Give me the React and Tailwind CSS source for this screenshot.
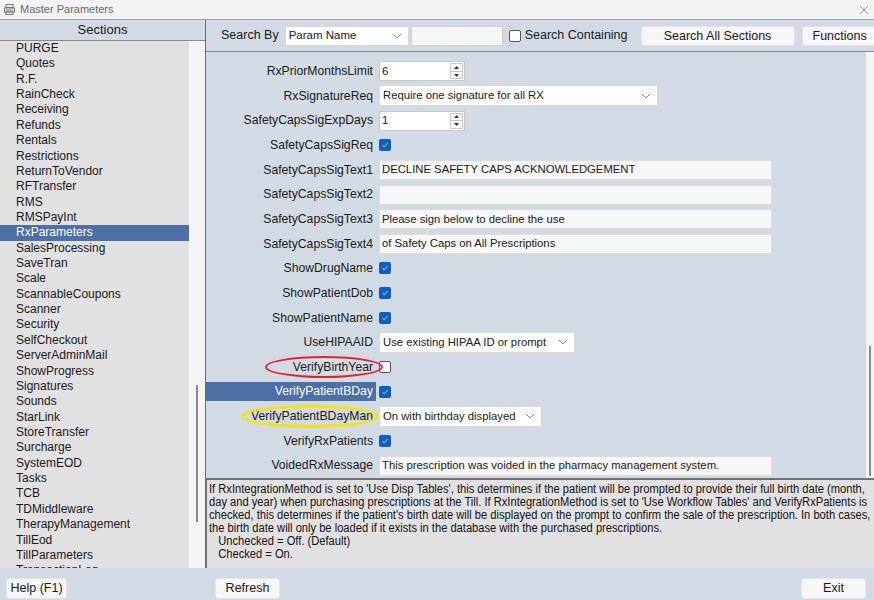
import React from 'react';

const sections = [
  'PURGE', 'Quotes', 'R.F.', 'RainCheck', 'Receiving', 'Refunds', 'Rentals', 'Restrictions',
  'ReturnToVendor', 'RFTransfer', 'RMS', 'RMSPayInt', 'RxParameters', 'SalesProcessing', 'SaveTran',
  'Scale', 'ScannableCoupons', 'Scanner', 'Security', 'SelfCheckout', 'ServerAdminMail', 'ShowProgress',
  'Signatures', 'Sounds', 'StarLink', 'StoreTransfer', 'Surcharge', 'SystemEOD', 'Tasks', 'TCB',
  'TDMiddleware', 'TherapyManagement', 'TillEod', 'TillParameters', 'TransactionLog',
];

const params = [
  { name: 'RxPriorMonthsLimit', type: 'spin', value: '6' },
  { name: 'RxSignatureReq', type: 'select', value: 'Require one signature for all RX', w: 'w-[279px]' },
  { name: 'SafetyCapsSigExpDays', type: 'spin', value: '1' },
  { name: 'SafetyCapsSigReq', type: 'check', value: true },
  { name: 'SafetyCapsSigText1', type: 'text', value: 'DECLINE SAFETY CAPS ACKNOWLEDGEMENT' },
  { name: 'SafetyCapsSigText2', type: 'text', value: '' },
  { name: 'SafetyCapsSigText3', type: 'text', value: 'Please sign below to decline the use' },
  { name: 'SafetyCapsSigText4', type: 'text', value: 'of Safety Caps on All Prescriptions' },
  { name: 'ShowDrugName', type: 'check', value: true },
  { name: 'ShowPatientDob', type: 'check', value: true },
  { name: 'ShowPatientName', type: 'check', value: true },
  { name: 'UseHIPAAID', type: 'select', value: 'Use existing HIPAA ID or prompt', w: 'w-[196px]' },
  { name: 'VerifyBirthYear', type: 'check', value: false, mark: 'red' },
  { name: 'VerifyPatientBDay', type: 'check', value: true, selected: true },
  { name: 'VerifyPatientBDayMan', type: 'select', value: 'On with birthday displayed', w: 'w-[163px]', mark: 'yellow' },
  { name: 'VerifyRxPatients', type: 'check', value: true },
  { name: 'VoidedRxMessage', type: 'text', value: 'This prescription was voided in the pharmacy management system.' },
];

const helpLines = [
  "If RxIntegrationMethod is set to 'Use Disp Tables', this determines if the patient will be prompted to provide their full birth date (month,",
  "day and year) when purchasing prescriptions at the Till. If RxIntegrationMethod is set to 'Use Workflow Tables' and VerifyRxPatients is",
  "checked, this determines if the patient's birth date will be displayed on the prompt to confirm the sale of the prescription. In both cases,",
  'the birth date will only be loaded if it exists in the database with the purchased prescriptions.',
];

const Chevron = () => (
  <svg width="10" height="6" viewBox="0 0 10 6" className="shrink-0">
    <path d="M1 1 L5 5 L9 1" fill="none" stroke="#8a8a8a" strokeWidth="1" />
  </svg>
);

const Check = ({ on }) =>
  on ? (
    <span className="w-[12px] h-[12px] rounded-[2px] bg-[#0f5fc2] flex items-center justify-center">
      <svg width="8" height="8" viewBox="0 0 8 8">
        <path d="M1.5 4.2 L3.2 5.8 L6.5 2.2" fill="none" stroke="#cfe0f7" strokeWidth="1" />
      </svg>
    </span>
  ) : (
    <span className="w-[12px] h-[12px] rounded-[2px] bg-white border border-[#555]" />
  );

const Control = ({ p }) => {
  if (p.type === 'check') return <Check on={p.value} />;
  if (p.type === 'spin')
    return (
      <div className="w-[86px] h-[20px] bg-white border border-[#c8c8c8] flex items-center justify-between pl-[2px] pr-[1px]">
        <span>{p.value}</span>
        <div className="w-[13px] h-[16px] flex flex-col border border-[#c8c8c8]">
          <div className="flex-1 flex items-center justify-center border-b border-[#c8c8c8]">
            <svg width="5" height="3" viewBox="0 0 5 3"><path d="M0 3 L2.5 0 L5 3Z" fill="#333" /></svg>
          </div>
          <div className="flex-1 flex items-center justify-center">
            <svg width="5" height="3" viewBox="0 0 5 3"><path d="M0 0 L2.5 3 L5 0Z" fill="#333" /></svg>
          </div>
        </div>
      </div>
    );
  if (p.type === 'select')
    return (
      <div className={`${p.w} h-[21px] bg-white border border-[#d8d8d8] rounded-[2px] flex items-center justify-between pl-[3px] pr-[6px]`}>
        <span className="whitespace-nowrap">{p.value}</span>
        <Chevron />
      </div>
    );
  return (
    <div className="w-[393px] h-[20px] bg-[#f7f7f7] border border-[#dcdcdc] flex items-center pl-[2px]">
      <span className="whitespace-nowrap">{p.value}</span>
    </div>
  );
};

export default function App() {
  return (
    <div
      className="w-[874px] h-[600px] flex flex-col bg-[#d2dbe4] text-[#1a1a1a] overflow-hidden"
      style={{ fontFamily: '"Liberation Sans", Arial, sans-serif' }}
    >
      {/* title bar */}
      <div className="h-[20px] shrink-0 bg-[#f3f3f3] flex items-center justify-between pl-[4px] pr-[3px] border-b border-[#9aa0a6]">
        <div className="flex items-center gap-[5px]">
          <svg width="11" height="11" viewBox="0 0 11 11">
            <rect x="2" y="0.5" width="7" height="3" fill="none" stroke="#777" />
            <rect x="0.5" y="4" width="10" height="4" fill="none" stroke="#777" />
            <rect x="2" y="8" width="7" height="2.5" fill="none" stroke="#777" />
            <line x1="2" y1="6" x2="9" y2="6" stroke="#777" />
          </svg>
          <span className="text-[11px] text-[#6a6a6a]">Master Parameters</span>
        </div>
        <svg width="10" height="10" viewBox="0 0 10 10" className="mr-[2px]">
          <path d="M1 1 L9 9 M9 1 L1 9" stroke="#9a9a9a" strokeWidth="1" />
        </svg>
      </div>

      {/* main */}
      <div className="flex h-[548px] shrink-0">
        {/* sections */}
        <div className="w-[206px] shrink-0 flex flex-col border-r border-[#6f6f6f]">
          <div className="h-[21px] flex items-center justify-center text-[13px] border-b border-[#8a8a8a]">
            Sections
          </div>
          <div className="flex-1 flex overflow-hidden">
            <div className="w-[189px] shrink-0 bg-[#e1e1e1] text-[12px]">
              {sections.map((s) => (
                <div
                  key={s}
                  className={`h-[15.37px] leading-[15.37px] pl-[16px] whitespace-nowrap ${
                    s === 'RxParameters' ? 'bg-[#4e6ea6] text-white' : ''
                  }`}
                >
                  {s}
                </div>
              ))}
            </div>
            <div className="flex-1 bg-[#f4f4f4] flex justify-center">
              <div className="w-[2px] h-[137px] mt-[344px] bg-[#8a8a8a]" />
            </div>
          </div>
        </div>

        {/* right */}
        <div className="flex-1 min-w-0 flex flex-col">
          <div className="h-[32px] shrink-0 flex items-center border-b border-[#8a8a8a] text-[12.5px] pl-[15px] whitespace-nowrap">
            <span>Search By</span>
            <div className="ml-[6px] w-[124px] h-[20px] shrink-0 bg-white border border-[#d8d8d8] rounded-[2px] flex items-center justify-between pl-[3px] pr-[6px] text-[11.5px]">
              <span>Param Name</span>
              <Chevron />
            </div>
            <div className="ml-[2px] w-[92px] h-[20px] shrink-0 bg-[#f7f7f7] border border-[#d0d0d0]" />
            <span className="ml-[6px] w-[12px] h-[12px] border border-[#555] rounded-[2px] bg-white shrink-0" />
            <span className="ml-[4px]">Search Containing</span>
            <button className="ml-[13px] w-[154px] h-[20px] shrink-0 bg-[#f6f6f6] rounded-[3px] border border-[#e4e4e4]">
              Search All Sections
            </button>
            <button className="ml-[7px] w-[78px] h-[20px] shrink-0 bg-[#f6f6f6] rounded-l-[3px] border border-[#e4e4e4] text-left pl-[10px]">
              Functions
            </button>
          </div>

          <div className="flex-1 flex">
            <div className="flex-1 flex flex-col pt-[7px] text-[11.3px]">
              {params.map((p) => (
                <div key={p.name} className="relative h-[24.65px] flex items-center">
                  <div
                    className={`w-[170px] shrink-0 h-[19px] flex items-center justify-end pr-[3px] text-[12.2px] whitespace-nowrap ${
                      p.selected ? 'bg-[#4e6ea6] text-white' : ''
                    }`}
                  >
                    {p.name}
                  </div>
                  <div className="ml-[3px] shrink-0 flex items-center">
                    <Control p={p} />
                  </div>
                  {p.mark === 'red' && (
                    <div className="absolute left-[59px] top-[1px] w-[118px] h-[22px] rounded-[50%] border-[2.5px] border-[#e3232b]" />
                  )}
                  {p.mark === 'yellow' && (
                    <div className="absolute left-[35px] top-[1px] w-[138px] h-[23px] rounded-[50%] border-[3px] border-[#f6e400]" />
                  )}
                </div>
              ))}
            </div>
            <div className="w-[8px] shrink-0 bg-[#f4f4f4] flex justify-center">
              <div className="w-[2px] h-[130px] mt-[294px] bg-[#8a8a8a]" />
            </div>
          </div>

          <div className="h-[90px] shrink-0 bg-[#e1e1e1] border-t-2 border-l border-[#6f6f6f] pl-[2px] pt-[3px] text-[12px] leading-[13px] text-[#111] overflow-hidden">
            {helpLines.map((l) => (
              <div key={l} className="whitespace-nowrap origin-left scale-x-[0.928]">{l}</div>
            ))}
            <div className="pl-[10px] origin-left scale-x-[0.928]">Unchecked = Off. (Default)</div>
            <div className="pl-[10px] origin-left scale-x-[0.928]">Checked = On.</div>
          </div>
        </div>
      </div>

      {/* bottom bar */}
      <div className="flex-1 flex items-end pb-[1px] text-[12.5px]">
        <div className="w-[206px] shrink-0 pl-[6px]">
          <button className="w-[61px] h-[21px] bg-[#f6f6f6] rounded-[3px] border border-[#e4e4e4] whitespace-nowrap">Help (F1)</button>
        </div>
        <div className="flex-1 flex justify-between pl-[9px] pr-[8px]">
          <button className="w-[65px] h-[21px] bg-[#f6f6f6] rounded-[3px] border border-[#e4e4e4]">Refresh</button>
          <button className="w-[65px] h-[21px] bg-[#f6f6f6] rounded-[3px] border border-[#e4e4e4]">Exit</button>
        </div>
      </div>
    </div>
  );
}
